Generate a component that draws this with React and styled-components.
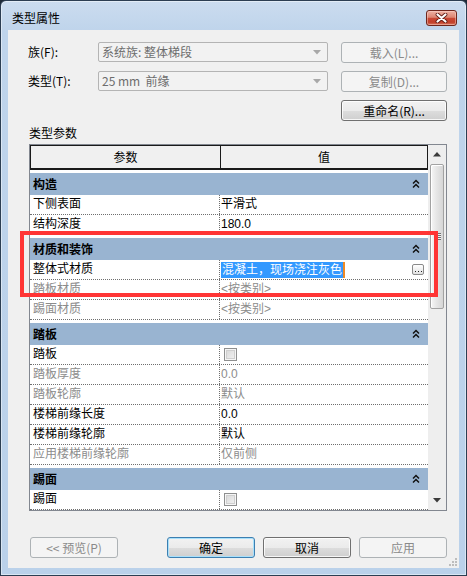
import React from 'react';
import styled, { createGlobalStyle } from 'styled-components';

const Global = createGlobalStyle`
  html, body { margin: 0; padding: 0; background: #1e2a38; }
  body { width: 467px; height: 576px; overflow: hidden; }
  * { box-sizing: border-box; }
`;

const UI_FONT = `"Liberation Sans", "Noto Sans CJK SC", sans-serif`;

const Window = styled.div`
  width: 467px;
  height: 576px;
  border: 1px solid #2c3e52;
  border-radius: 6px 6px 0 0;
  background: linear-gradient(#cbdcef 0px, #bfd4eb 30px, #bad1ea 100%);
  box-shadow: inset 0 0 0 1px rgba(255, 255, 255, 0.45);
  padding: 0 7px 7px 7px;
  display: flex;
  flex-direction: column;
  font-family: ${UI_FONT};
`;

const TitleBar = styled.div`
  height: 29px;
  flex: none;
  display: flex;
  align-items: flex-start;
  justify-content: space-between;
  padding: 9px 2px 0 4px;
`;

const TitleText = styled.div`
  font-family: "Noto Sans CJK SC", sans-serif;
  font-size: 12px;
  line-height: 16px;
  color: #000;
`;

const CloseButton = styled.div`
  width: 31px;
  height: 16px;
  border: 1px solid #6e261c;
  border-radius: 3px;
  background: linear-gradient(#eeb1a3 0%, #dd8572 45%, #c94834 52%, #c13f2a 80%, #d7765f 100%);
  box-shadow: inset 0 0 0 1px rgba(255, 220, 210, 0.45);
  display: flex;
  align-items: center;
  justify-content: center;
`;

const Client = styled.div`
  flex: 1;
  position: relative;
  background: #f0f0f0;
  padding: 12px 12px 0 20px;
  display: flex;
  flex-direction: column;
`;

const FormGrid = styled.div`
  display: grid;
  grid-template-columns: 57px 230px 106px;
  grid-template-rows: 21px 21px 21px;
  column-gap: 13px;
  row-gap: 8px;
  font-size: 12px;
`;

const FieldLabel = styled.div`
  line-height: 20px;
  color: #000;
  font-family: "Noto Sans CJK SC", sans-serif;
  white-space: nowrap;
`;

const Combo = styled.div`
  height: 20px;
  border: 1px solid #b4b4b4;
  border-radius: 2px;
  background: #f2f2f2;
  color: #6d6d6d;
  display: flex;
  align-items: center;
  padding: 0 6px 0 3px;
  line-height: 18px;
  font-family: "Noto Sans CJK SC", sans-serif;
  white-space: pre;
`;

const ComboText = styled.span`
  flex: 1;
`;

const Btn = styled.div`
  height: 21px;
  border-radius: 3px;
  display: flex;
  align-items: center;
  justify-content: center;
  font-size: 12px;
  line-height: 19px;
  font-family: "Noto Sans CJK SC", sans-serif;
  white-space: nowrap;
  width: ${(p) => (p.$w ? `${p.$w}px` : 'auto')};
  color: ${(p) => (p.$disabled ? '#8a8a8a' : '#000')};
  border: 1px solid ${(p) => (p.$disabled ? '#adb2b5' : p.$default ? '#3c7fb1' : '#707070')};
  background: ${(p) =>
    p.$disabled
      ? '#f4f4f4'
      : 'linear-gradient(#f2f2f2 0%, #ebebeb 50%, #dddddd 51%, #cfcfcf 100%)'};
  box-shadow: ${(p) =>
    p.$disabled
      ? 'none'
      : p.$default
      ? 'inset 0 0 0 1px #a8e0fb'
      : 'inset 0 0 0 1px rgba(255,255,255,0.8)'};
`;

const SectionLabel = styled.div`
  margin: 4px 0 3px 1px;
  font-size: 12px;
  line-height: 16px;
  font-family: "Noto Sans CJK SC", sans-serif;
  color: #000;
`;

const Table = styled.div`
  margin-left: 1px;
  height: 367px;
  border: 1px solid #828790;
  display: flex;
  background: #fff;
`;

const Content = styled.div`
  flex: 1;
  display: flex;
  flex-direction: column;
  overflow: hidden;
  font-family: "Liberation Sans", "Noto Sans CJK SC", sans-serif;
  font-size: 12px;
`;

const HeaderRow = styled.div`
  display: grid;
  grid-template-columns: 190px 1fr;
  height: 25px;
  flex: none;
  background: #f0f0f0;
  border-top: 1px solid #1a1a1a;
  border-left: 1px solid #1a1a1a;
  border-bottom: 2px solid #1a1a1a;
`;

const HeaderCell = styled.div`
  border-right: 1px solid #1a1a1a;
  display: flex;
  align-items: center;
  justify-content: center;
  color: #000;
  font-family: "Noto Sans CJK SC", sans-serif;
  line-height: 20px;
`;

const GroupRow = styled.div`
  margin-top: 3px;
  height: 22px;
  flex: none;
  background: #99b4d1;
  display: flex;
  align-items: center;
  padding: 0 8px 0 3px;
  font-weight: bold;
  color: #000;
  font-family: "Noto Sans CJK SC", sans-serif;
`;

const GroupTitle = styled.span`
  flex: 1;
  line-height: 20px;
`;

const Row = styled.div`
  display: grid;
  grid-template-columns: 190px 1fr;
  height: 20px;
  flex: none;
  border-bottom: 1px dotted #6f6f6f;
`;

const LabelCell = styled.div`
  border-right: 1px dotted #6f6f6f;
  padding-left: 3px;
  line-height: 19px;
  white-space: nowrap;
  color: ${(p) => (p.$disabled ? '#8c8c8c' : '#000')};
`;

const ValueCell = styled.div`
  display: flex;
  align-items: center;
  padding: 0 4px 0 1px;
  line-height: 19px;
  white-space: nowrap;
  color: ${(p) => (p.$disabled ? '#8c8c8c' : '#000')};
`;

const Selected = styled.span`
  background: #3399ff;
  color: #fff;
  line-height: 16px;
  padding: 0 1px;
  border-right: 2px solid #f08a24;
`;

const Spacer = styled.span`
  flex: 1;
`;

const DotsButton = styled.span`
  width: 12px;
  height: 11px;
  border: 1px solid #8a8a8a;
  border-radius: 2px;
  background: linear-gradient(#ffffff, #e2e2e2);
  display: flex;
  align-items: flex-end;
  justify-content: center;
  padding-bottom: 2px;
`;

const Check = styled.span`
  width: 13px;
  height: 13px;
  margin-left: 3px;
  border: 1px solid #8e8f8f;
  background: linear-gradient(135deg, #d6d6d6, #f4f4f4);
  box-shadow: inset 0 0 0 1px #f6f6f6, inset 0 0 0 2px #cfcfcf;
`;

const ScrollBar = styled.div`
  width: 18px;
  flex: none;
  background: #eeeeee;
  display: flex;
  flex-direction: column;
  align-items: center;
`;

const ArrowBox = styled.div`
  height: 19px;
  width: 100%;
  display: flex;
  align-items: center;
  justify-content: center;
  flex: none;
`;

const Thumb = styled.div`
  width: 14px;
  height: 145px;
  flex: none;
  border: 1px solid #a2a2a2;
  border-radius: 2px;
  background: linear-gradient(90deg, #f6f6f6 0%, #e6e6e6 45%, #d6d6d6 100%);
  box-shadow: inset 1px 1px 0 #fff;
  display: flex;
  align-items: center;
  justify-content: center;
`;

const Grip = styled.div`
  width: 7px;
  height: 7px;
  background: repeating-linear-gradient(#6f6f6f 0px, #6f6f6f 1px, #f2f2f2 1px, #f2f2f2 2px);
`;

const Track = styled.div`
  flex: 1;
`;

const ButtonBar = styled.div`
  margin-top: 26px;
  margin-left: 2px;
  display: flex;
  gap: 8px;
`;

const BarSpacer = styled.div`
  flex: 1;
`;

const Highlight = styled.div`
  position: absolute;
  left: 12px;
  top: 201px;
  width: 418px;
  height: 66px;
  border: 4px solid #ff3535;
  pointer-events: none;
`;

const SizeGrip = styled.svg`
  position: absolute;
  right: 1px;
  bottom: 1px;
`;

const ChevronUp = () => (
  <svg width="8" height="10" viewBox="0 0 8 10">
    <path d="M1 4.5 L4 1.5 L7 4.5 M1 8.5 L4 5.5 L7 8.5" fill="none" stroke="#111" strokeWidth="1.5" />
  </svg>
);

const Triangle = ({ down, color = '#3a3a3a' }) => (
  <svg width="8" height="5" viewBox="0 0 8 5">
    <path d={down ? 'M0 0 L8 0 L4 4.5 Z' : 'M0 4.5 L8 4.5 L4 0 Z'} fill={color} />
  </svg>
);

const groups = [
  {
    title: '构造',
    rows: [
      { label: '下侧表面', value: '平滑式' },
      { label: '结构深度', value: '180.0' },
    ],
  },
  {
    title: '材质和装饰',
    rows: [
      { label: '整体式材质', value: '混凝土，现场浇注灰色', selected: true },
      { label: '踏板材质', value: '<按类别>', disabled: true },
      { label: '踢面材质', value: '<按类别>', disabled: true },
    ],
  },
  {
    title: '踏板',
    rows: [
      { label: '踏板', check: true },
      { label: '踏板厚度', value: '0.0', disabled: true },
      { label: '踏板轮廓', value: '默认', disabled: true },
      { label: '楼梯前缘长度', value: '0.0' },
      { label: '楼梯前缘轮廓', value: '默认' },
      { label: '应用楼梯前缘轮廓', value: '仅前侧', disabled: true },
    ],
  },
  {
    title: '踢面',
    rows: [{ label: '踢面', check: true }],
  },
];

function ParamRow({ row }) {
  return (
    <Row>
      <LabelCell $disabled={row.disabled}>{row.label}</LabelCell>
      <ValueCell $disabled={row.disabled}>
        {row.check ? (
          <Check />
        ) : row.selected ? (
          <>
            <Selected>{row.value}</Selected>
            <Spacer />
            <DotsButton>
              <svg width="7" height="1" viewBox="0 0 7 1">
                <rect x="0" y="0" width="1" height="1" fill="#222" />
                <rect x="3" y="0" width="1" height="1" fill="#222" />
                <rect x="6" y="0" width="1" height="1" fill="#222" />
              </svg>
            </DotsButton>
          </>
        ) : (
          row.value
        )}
      </ValueCell>
    </Row>
  );
}

export default function App() {
  return (
    <>
      <Global />
      <Window>
        <TitleBar>
          <TitleText>类型属性</TitleText>
          <CloseButton>
            <svg width="13" height="10" viewBox="0 0 13 10">
              <path d="M2.5 1.5 L10.5 8.5 M10.5 1.5 L2.5 8.5" stroke="#5e1a12" strokeWidth="3.8" strokeLinecap="round" />
              <path d="M2.5 1.5 L10.5 8.5 M10.5 1.5 L2.5 8.5" stroke="#ffffff" strokeWidth="2.2" strokeLinecap="round" />
            </svg>
          </CloseButton>
        </TitleBar>
        <Client>
          <FormGrid>
            <FieldLabel>族(F):</FieldLabel>
            <Combo>
              <ComboText>系统族: 整体梯段</ComboText>
              <Triangle down color="#a8a8a8" />
            </Combo>
            <Btn $disabled>载入(L)...</Btn>
            <FieldLabel>类型(T):</FieldLabel>
            <Combo>
              <ComboText>25 mm  前缘</ComboText>
              <Triangle down color="#a8a8a8" />
            </Combo>
            <Btn $disabled>复制(D)...</Btn>
            <span />
            <span />
            <Btn>重命名(R)...</Btn>
          </FormGrid>
          <SectionLabel>类型参数</SectionLabel>
          <Table>
            <Content>
              <HeaderRow>
                <HeaderCell>参数</HeaderCell>
                <HeaderCell>值</HeaderCell>
              </HeaderRow>
              {groups.map((g) => (
                <React.Fragment key={g.title}>
                  <GroupRow>
                    <GroupTitle>{g.title}</GroupTitle>
                    <ChevronUp />
                  </GroupRow>
                  {g.rows.map((r) => (
                    <ParamRow key={g.title + r.label} row={r} />
                  ))}
                </React.Fragment>
              ))}
            </Content>
            <ScrollBar>
              <ArrowBox>
                <Triangle />
              </ArrowBox>
              <Thumb>
                <Grip />
              </Thumb>
              <Track />
              <ArrowBox>
                <Triangle down />
              </ArrowBox>
            </ScrollBar>
          </Table>
          <ButtonBar>
            <Btn $w={88} $disabled>&lt;&lt; 预览(P)</Btn>
            <BarSpacer />
            <Btn $w={88} $default>确定</Btn>
            <Btn $w={88}>取消</Btn>
            <Btn $w={88} $disabled>应用</Btn>
          </ButtonBar>
          <Highlight />
          <SizeGrip width="10" height="10" viewBox="0 0 10 10">
            {[
              [7, 1],
              [7, 4],
              [4, 4],
              [7, 7],
              [4, 7],
              [1, 7],
            ].map(([x, y]) => (
              <rect key={`${x}-${y}`} x={x} y={y} width="2" height="2" fill="#bdbdbd" />
            ))}
          </SizeGrip>
        </Client>
      </Window>
    </>
  );
}
